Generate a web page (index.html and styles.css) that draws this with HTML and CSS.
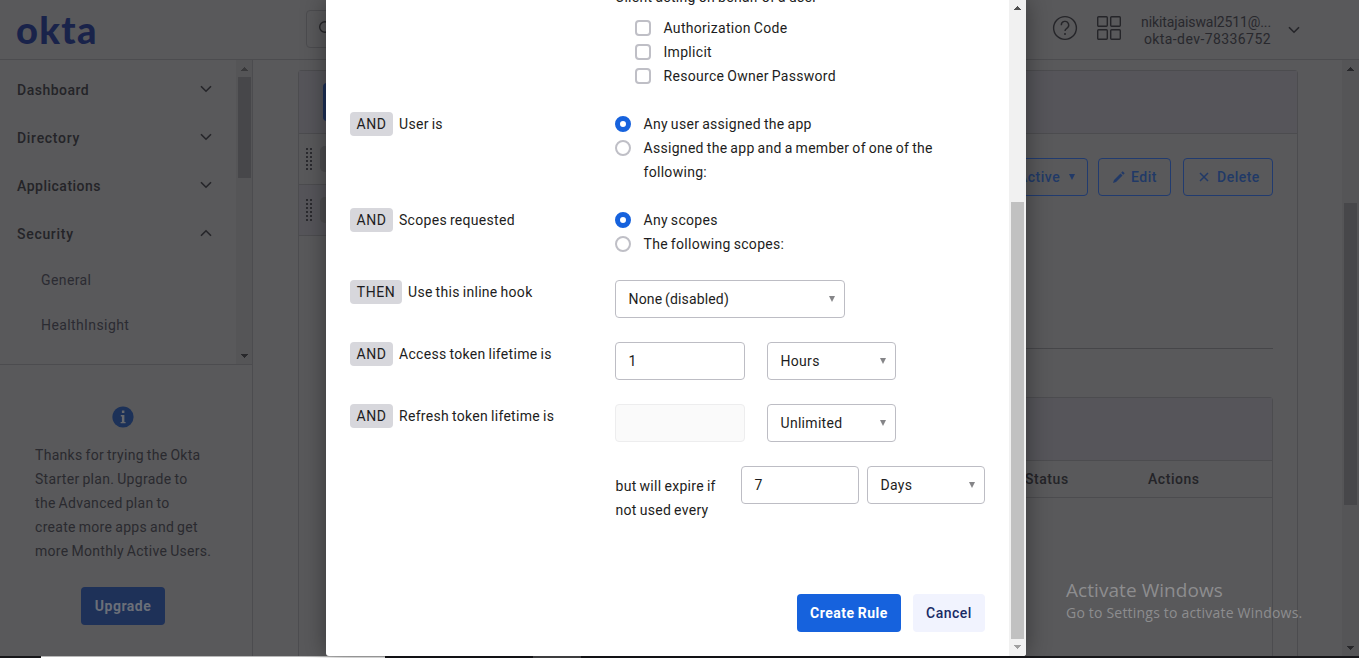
FILE: index.html
```html
<!DOCTYPE html>
<html lang="en">
<head>
<meta charset="utf-8">
<title>Okta - Add Rule</title>
<link rel="stylesheet" href="styles.css">
</head>
<body>
<div class="app">
  <header class="topbar">
    <div class="logo">okta</div>
    <div class="search"><svg width="14" height="14" viewBox="0 0 14 14"><circle cx="6" cy="6" r="5.3"/></svg></div>
    <div class="account">
      <svg class="help" width="26" height="26" viewBox="0 0 26 26"><circle cx="13" cy="13" r="11.4"/><path d="M9.3 10.2a3.7 3.7 0 1 1 5.5 3.1c-1.2.7-1.8 1.2-1.8 2.7"/><circle class="dot" cx="13" cy="19" r="1"/></svg>
      <svg class="apps" width="24" height="24" viewBox="0 0 24 24"><rect x=".7" y=".7" width="9.6" height="9.6" rx="1"/><rect x="13.7" y=".7" width="9.6" height="9.6" rx="1"/><rect x=".7" y="13.7" width="9.6" height="9.6" rx="1"/><rect x="13.7" y="13.7" width="9.6" height="9.6" rx="1"/></svg>
      <div class="who"><div class="mail">nikitajaiswal2511@...</div><div class="org">okta-dev-78336752</div></div>
      <svg class="chev" width="12" height="8" viewBox="0 0 12 8"><path d="M1 1.2l5 5 5-5"/></svg>
    </div>
  </header>
  <div class="columns">
    <aside class="side">
      <div class="navwrap">
        <nav class="nav">
          <a class="item"><span>Dashboard</span><svg class="chev" width="12" height="8" viewBox="0 0 12 8"><path d="M1 1.2l5 5 5-5"/></svg></a>
          <a class="item"><span class="wide">Directory</span><svg class="chev" width="12" height="8" viewBox="0 0 12 8"><path d="M1 1.2l5 5 5-5"/></svg></a>
          <a class="item"><span>Applications</span><svg class="chev" width="12" height="8" viewBox="0 0 12 8"><path d="M1 1.2l5 5 5-5"/></svg></a>
          <a class="item"><span class="wide">Security</span><svg class="chev" width="12" height="8" viewBox="0 0 12 8"><path d="M1 6.8l5-5 5 5"/></svg></a>
          <a class="sub">General</a>
          <a class="sub">HealthInsight</a>
        </nav>
        <div class="bar navbar"><i class="up"></i><b></b><i class="down"></i></div>
      </div>
      <div class="promo">
        <svg class="info" width="22" height="22" viewBox="0 0 22 22"><circle cx="11" cy="11" r="10.6"/><path d="M8.800 9h3.600v7h1.200v1.300H8.600V16h1.300v-5.600H8.800zM9.900 4.600h2.500v2.500H9.900z"/></svg>
        <p>Thanks for trying the Okta<br>Starter plan. Upgrade to<br>the Advanced plan to<br>create more apps and get<br>more Monthly Active Users.</p>
        <div class="upgrade">Upgrade</div>
      </div>
    </aside>
    <main class="main">
      <section class="panel">
        <div class="phead"><span class="add"></span></div>
        <div class="pbody">
          <div class="rules">
            <div class="rule"><svg width="6" height="22" viewBox="0 0 6 22"><path d="M1 0v22M5 0v22"/></svg><span></span></div>
            <div class="rule on"><svg width="6" height="22" viewBox="0 0 6 22"><path d="M1 0v22M5 0v22"/></svg><span></span></div>
          </div>
          <div class="detail">
            <div class="actions">
              <div class="obtn active">Active<i></i></div>
              <div class="obtn edit"><svg width="12" height="12" viewBox="0 0 12 12"><path d="M0 12l1-3 6.5-6.5 2 2L3 11zM8.200 1.800L9.700.3l2 2-1.500 1.500z"/></svg>Edit</div>
              <div class="obtn delete"><svg class="x" width="10" height="10" viewBox="0 0 10 10"><path d="M1 1l8 8M9 1l-8 8"/></svg>Delete</div>
            </div>
            <div class="table">
              <div class="thead"></div>
              <div class="trow"><span class="status">Status</span><span class="act">Actions</span></div>
            </div>
          </div>
        </div>
      </section>
      <div class="bar pagebar"><i class="up"></i><b></b><i class="down"></i></div>
    </main>
  </div>
  <div class="taskbar"><span class="light"></span><span class="gray"></span></div>
</div>

<div class="watermark"><div class="w1">Activate Windows</div><div class="w2">Go to Settings to activate Windows.</div></div>

<div class="modal">
  <div class="form">
    <div class="row">
      <div></div>
      <div>
        <div class="line cut">Client acting on behalf of a user</div>
        <div class="checks">
          <label class="opt"><i class="box"></i><span>Authorization Code</span></label>
          <label class="opt"><i class="box"></i><span>Implicit</span></label>
          <label class="opt"><i class="box"></i><span>Resource Owner Password</span></label>
        </div>
      </div>
    </div>
    <div class="row">
      <div class="lab"><em>AND</em><span>User is</span></div>
      <div>
        <label class="opt"><i class="radio sel"></i><span>Any user assigned the app</span></label>
        <label class="opt"><i class="radio"></i><span>Assigned the app and a member of one of the<br>following:</span></label>
      </div>
    </div>
    <div class="row">
      <div class="lab"><em>AND</em><span>Scopes requested</span></div>
      <div>
        <label class="opt"><i class="radio sel"></i><span>Any scopes</span></label>
        <label class="opt"><i class="radio"></i><span>The following scopes:</span></label>
      </div>
    </div>
    <div class="row">
      <div class="lab"><em class="then">THEN</em><span>Use this inline hook</span></div>
      <div><div class="field select hook">None (disabled)<i></i></div></div>
    </div>
    <div class="row">
      <div class="lab"><em>AND</em><span>Access token lifetime is</span></div>
      <div class="pair"><div class="field num">1</div><div class="field select unit">Hours<i></i></div></div>
    </div>
    <div class="row">
      <div class="lab"><em>AND</em><span>Refresh token lifetime is</span></div>
      <div class="pair"><div class="field num off"></div><div class="field select unit">Unlimited<i></i></div></div>
    </div>
    <div class="row">
      <div></div>
      <div class="expire"><div class="note">but will expire if<br>not used every</div><div class="field small">7</div><div class="field select small">Days<i></i></div></div>
    </div>
    <div class="buttons"><div class="create">Create Rule</div><div class="cancel">Cancel</div></div>
  </div>
  <div class="bar modalbar"><i class="up"></i><b></b><i class="down"></i></div>
</div>
</body>
</html>
```
FILE: styles.css
```css
* { box-sizing: border-box; }
body {
  margin: 0;
  width: 1359px;
  height: 658px;
  overflow: hidden;
  position: relative;
  background: #59595b;
  font: 14px/24px Roboto, "Liberation Sans", sans-serif;
  letter-spacing: 0.3px;
  word-spacing: -0.8px;
  color: #1d1d21;
}
i, em { font-style: normal; }
svg { display: block; fill: none; }

.app { display: flex; flex-direction: column; height: 658px; }
.topbar { display: flex; height: 60px; border-bottom: 1px solid #4c4c4f; flex: none; }
.logo {
  width: 289px; margin-left: 16px;
  font: 900 38px/58px Lato, sans-serif;
  letter-spacing: 1.3px;
  color: #19234a;
}
.search {
  width: 400px; height: 38px; margin-top: 10px; padding: 10px 0 0 12px; margin-left: 1px;
  border: 1px solid #4c4c4f; border-radius: 4px;
}
.search svg { stroke: #252529; stroke-width: 1.4; }
.account { display: flex; margin-left: auto; margin-right: 59px; color: #28282d; }
.account svg { stroke: #252529; stroke-width: 1.4; }
.help { margin-top: 15px; }
.account .help .dot { fill: #252529; stroke: none; }
.apps { margin: 16px 0 0 19px; }
.who { width: 131px; margin: 14px 17px 0 19px; line-height: 17px; text-align: right; white-space: nowrap; }
.mail { letter-spacing: -.1px; }
.org { letter-spacing: .42px; }
.chev { stroke: #252529; stroke-width: 1.6; }
.account .chev { margin-top: 26px; stroke-width: 1.6; }

.columns { display: flex; flex: 1; min-height: 0; }
.side { width: 253px; border-right: 1px solid #4c4c4f; flex: none; }
.navwrap { display: flex; height: 305px; border-bottom: 1px solid #4c4c4f; }
.nav { flex: 1; padding-top: 6px; }
.item { display: flex; justify-content: space-between; height: 48px; line-height: 48px; padding: 0 24px 0 17px; font-weight: 500; color: #242428; letter-spacing: .5px; }
.item .wide { letter-spacing: .7px; }
.item .chev { margin-top: 19px; }
.sub { display: block; height: 45px; padding-left: 41px; line-height: 45px; color: #2b2b32; letter-spacing: .4px; }

.bar { display: flex; flex-direction: column; align-items: center; flex: none; }
.bar b { display: block; width: 13px; }
.bar i { height: 17px; width: 7px; display: block; }
.bar .up { background: conic-gradient(from 135deg at 50% 0, currentColor 90deg, transparent 0) 0 7px/7px 4px no-repeat; }
.bar .down { background: conic-gradient(from -45deg at 50% 100%, currentColor 90deg, transparent 0) 0 7px/7px 4px no-repeat; margin-top: auto; }
.navbar { width: 16px; background: #555557; color: #28282b; }
.navbar .up { color: #39393b; }
.navbar b { height: 101px; background: #47474a; }
.pagebar { width: 17px; background: #555557; color: #28282b; }
.pagebar b { height: 302px; margin-top: 126px; background: #47474a; }
.modalbar { width: 17px; background: #f1f1f1; color: #505050; height: 656px; }
.modalbar b { height: 437px; margin-top: 185px; background: #c1c1c1; }
.modalbar .up { background-position: 0 6px; }
.modalbar .down { color: #a0a0a0; background-position: 0 6px; }

.promo { padding: 41px 0 0 35px; color: #2a2a2f; }
.info { margin-left: 77px; }
.info circle { fill: #1c3158; }
.info path { fill: #66686c; }
.promo p { margin: 15px 0 24px; white-space: nowrap; }
.upgrade { width: 84px; height: 38px; margin-left: 46px; border-radius: 4px; background: #1e3158; color: #6b6f78; font-weight: 700; line-height: 38px; text-align: center; letter-spacing: .5px; }

.main { flex: 1; display: flex; justify-content: space-between; padding-left: 45px; }
.panel { width: 1000px; margin-top: 10px; border: 1px solid #4c4c4f; border-bottom: 0; border-radius: 4px 4px 0 0; display: flex; flex-direction: column; }
.phead { height: 63px; border-bottom: 1px solid #4c4c4f; background: #56555a; padding: 12px 24px; flex: none; }
.add { display: block; width: 80px; height: 38px; border-radius: 4px; background: #1e3158; }
.pbody { display: flex; flex: 1; }
.rules { width: 240px; }
.rule { height: 51px; display: flex; padding: 14px 7px; gap: 8px; border-bottom: 1px solid #4c4c4f; }
.rule.on { background: #56555a; }
.rule svg { stroke: #2a2a2e; stroke-width: 2; stroke-dasharray: 2 2; }
.rule span { width: 26px; height: 26px; margin-top: -2px; border-radius: 5px; background: #4e4e50; }
.detail { flex: 1; padding: 24px 24px 0 40px; display: flex; flex-direction: column; }
.actions { display: flex; justify-content: flex-end; height: 191px; border-bottom: 1px solid #464649; flex: none; }
.obtn { height: 38px; display: flex; align-items: center; border: 1px solid #213b6f; border-radius: 4px; color: #213967; font-weight: 500; letter-spacing: .5px; }
.obtn svg { fill: #213967; }
.obtn .x { fill: none; stroke: #213967; stroke-width: 1.5; }
.active { width: 100px; margin-right: 10px; padding-left: 29px; }
.active i { border: 3.5px solid transparent; border-top: 6px solid #213967; border-bottom: 0; margin-left: 9px; }
.edit { width: 73px; margin-right: 12px; padding-left: 14px; gap: 6px; }
.delete { width: 90px; padding-left: 15px; gap: 8px; }
.table { margin-top: 48px; flex: 1; border: 1px solid #4c4c4f; border-bottom: 0; border-radius: 4px 4px 0 0; }
.thead { height: 63px; background: #56555a; border-bottom: 1px solid #4c4c4f; }
.trow { display: flex; height: 37px; line-height: 36px; border-bottom: 1px solid #4c4c4f; justify-content: flex-end; font-weight: 500; color: #242428; letter-spacing: .55px; }
.status { width: 123px; }
.act { width: 124px; }

.taskbar { height: 2px; background: #17171a; display: flex; padding-left: 41px; flex: none; }
.light { width: 344px; background: linear-gradient(#b8b8b8 50%, #fff 50%); }
.gray { width: 48px; margin-left: 148px; background: #4c4c4e; }

.watermark { position: absolute; left: 1066px; top: 578px; color: #8d8d8f; font-family: "Open Sans", sans-serif; letter-spacing: 0; word-spacing: 0; white-space: nowrap; }
.w1 { font-size: 19px; line-height: 24px; letter-spacing: .06px; }
.w2 { font-size: 14px; line-height: 22px; letter-spacing: .2px; }

.modal { position: absolute; left: 326px; top: 0; width: 700px; height: 656px; display: flex; background: #fff; border-radius: 0 0 3px 3px; overflow: hidden; box-shadow: 0 0 24px rgba(0,0,0,.4); }
.form { width: 683px; padding-left: 24px; margin-top: -15px; display: flex; flex-direction: column; gap: 24px; }
.row { display: grid; grid-template-columns: 265px 370px; }
.checks { padding: 7px 0 0 20px; }
.lab { display: flex; gap: 6px; height: 24px; white-space: nowrap; }
.lab em { width: 43px; border-radius: 4px; background: #d7d7dc; text-align: center; letter-spacing: .5px; }
.lab .then { width: 52px; }
.opt { display: flex; gap: 12.5px; white-space: nowrap; }
.box, .radio { width: 16px; height: 16px; margin-top: 4px; border: 2px solid #bfbfc6; border-radius: 4px; flex: none; background: #fff; }
.radio { border-radius: 50%; }
.sel { border: 5px solid #1662dd; }
.field { height: 38px; padding-left: 12.5px; border: 1px solid #bdbdc4; border-radius: 4px; background: #fff; line-height: 36px; display: flex; align-items: center; justify-content: space-between; }
.field i { border: 3.5px solid transparent; border-top: 6px solid #858588; border-bottom: 0; margin-right: 9px; }
.hook { width: 230px; letter-spacing: .15px; }
.num { width: 130px; }
.off { background: #fafafa; border-color: #ededee; }
.unit { width: 129px; }
.pair { display: flex; gap: 22px; }
.expire { display: flex; height: 56px; }
.note { width: 126px; padding: 8px 0 0 .5px; white-space: nowrap; flex: none; }
.small { width: 118px; flex: none; }
.small + .small { margin-left: 8px; }
.buttons { display: flex; gap: 12px; margin: 48px 24px 0 0; justify-content: flex-end; line-height: 38px; text-align: center; font-weight: 700; }
.create { width: 104px; height: 38px; border-radius: 4px; background: #1662dd; color: #fff; letter-spacing: .5px; }
.cancel { width: 72px; height: 38px; border-radius: 4px; background: #f1f3fe; color: #192b66; font-weight: 500; letter-spacing: .5px; }
```
